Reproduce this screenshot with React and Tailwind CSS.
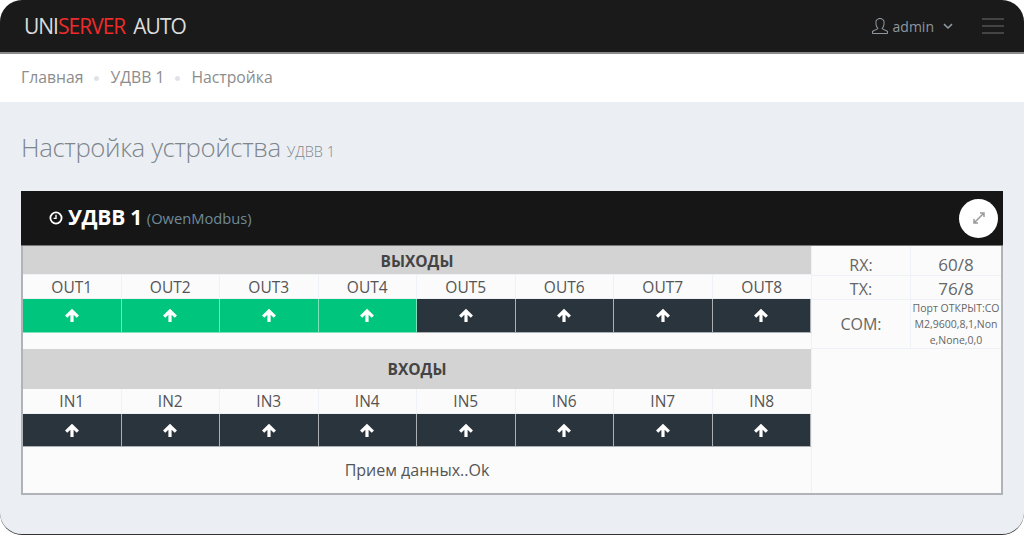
import React from "react";
import { SlUser } from "react-icons/sl";

const outs = ["OUT1","OUT2","OUT3","OUT4","OUT5","OUT6","OUT7","OUT8"];
const ins = ["IN1","IN2","IN3","IN4","IN5","IN6","IN7","IN8"];

function Labels({ items, h }) {
  return (
    <div className={`grid grid-cols-8 ${h} bg-[#fbfbfb] border-b border-[#eef1f5]`}>
      {items.map((t, i) => (
        <div key={t} className={`flex items-center justify-center pt-[1px] text-[15.5px] text-[#555] ${i < 7 ? "border-r border-[#eef1f5]" : ""}`}>{t}</div>
      ))}
    </div>
  );
}

function Arrow() {
  return (
    <svg className="w-[16px] h-[15px]" viewBox="0 0 15 14" fill="none" stroke="currentColor" strokeWidth="3">
      <path d="M7.5 13 V3.5 M2 8 L7.5 2.8 L13 8" />
    </svg>
  );
}

function Buttons({ green, h }) {
  return (
    <div className={`grid grid-cols-8 ${h}`}>
      {Array.from({ length: 8 }).map((_, i) => (
        <div key={i} className={`flex items-center justify-center text-white border-r border-b ${i < green ? "bg-[#00c57c] border-[#7fe0bc]" : "bg-[#2a343c] border-[#aab0b4]"}`}>
          <Arrow />
        </div>
      ))}
    </div>
  );
}

export default function App() {
  return (
    <div className="w-[1024px] h-[535px] bg-white overflow-hidden font-['Open_Sans',sans-serif]">
      <div className="h-[535px] rounded-[22px] overflow-hidden bg-[#ebeff4] border-b border-[#333] flex flex-col">
        <header className="h-[54px] shrink-0 bg-[#1a1a1a] border-b-2 border-[#8a8a8a] flex items-center pl-[24px] pr-[20px]">
          <div className="text-[21px] tracking-[-1px] text-[#dcdcdc] font-normal leading-none flex">
            <span>UNI</span><span className="text-[#ee2b2b]">SERVER</span><span className="ml-[8px]">AUTO</span>
          </div>
          <div className="ml-auto flex items-center text-[#8f979f] text-[14px]">
            <SlUser className="w-[16px] h-[16px] mr-[5px]" />
            <span>admin</span>
            <svg className="ml-[9px] w-[10px] h-[7px]" viewBox="0 0 10 7" fill="none" stroke="currentColor" strokeWidth="1.6"><path d="M1 1.2 L5 5 L9 1.2" /></svg>
            <div className="ml-[29px] w-[22px] flex flex-col gap-[5px]">
              <div className="h-[2px] bg-[#444]" />
              <div className="h-[2px] bg-[#444]" />
              <div className="h-[2px] bg-[#444]" />
            </div>
          </div>
        </header>

        <nav className="h-[48px] shrink-0 bg-white flex items-center pl-[21px] text-[15.75px] text-[#8c8c8c]">
          <span>Главная</span>
          <span className="w-[5px] h-[5px] rounded-full bg-[#dfe3e8] mx-[11px]" />
          <span>УДВВ 1</span>
          <span className="w-[5px] h-[5px] rounded-full bg-[#dfe3e8] mx-[11px]" />
          <span>Настройка</span>
        </nav>

        <main className="flex-1 px-[21px]">
          <h1 className="mt-[27px] h-[36px] flex items-baseline text-[#7f868c] font-light text-[25.8px] leading-[36px] tracking-[-0.4px]">
            Настройка устройства
            <small className="ml-[6px] text-[14.5px] font-light tracking-normal">УДВВ 1</small>
          </h1>

          <section className="mt-[26px] w-[982px] h-[304px] border-2 border-t-0 border-[#b0b4b8] bg-[#fbfbfb] flex flex-col">
            <div className="h-[55px] -mx-[2px] shrink-0 bg-[#161616] border-b border-[#777] flex items-center pl-[28px] pr-[5px]">
              <svg className="w-[14px] h-[14px] text-white mr-[5px]" viewBox="0 0 14 14" fill="none" stroke="currentColor" strokeWidth="1.8">
                <circle cx="7" cy="7" r="5.6" />
                <path d="M7 3.8 V7.4 H4.6" strokeWidth="1.4" />
              </svg>
              <span className="text-white font-bold text-[21px] tracking-[-0.3px]">УДВВ 1</span>
              <span className="ml-[5px] text-[14.7px] text-[#6f8a99]">(OwenModbus)</span>
              <button className="ml-auto w-[39px] h-[39px] rounded-full bg-white flex items-center justify-center">
                <svg className="w-[14px] h-[14px] text-[#9a9a9a]" viewBox="0 0 14 14" fill="none" stroke="currentColor" strokeWidth="1.5">
                  <path d="M2 12 L12 2 M8 2 H12 V6 M2 8 V12 H6" />
                </svg>
              </button>
            </div>

            <div className="flex flex-1">
              <div className="w-[789px] flex flex-col border-r border-[#eef1f5]">
                <div className="h-[29px] bg-[#d3d3d3] flex items-center justify-center pt-[3px] font-bold text-[15.5px] text-[#444] border-b border-[#eef1f5]">ВЫХОДЫ</div>
                <Labels items={outs} h="h-[24px]" />
                <Buttons green={4} h="h-[34px]" />
                <div className="h-[16px]" />
                <div className="h-[40px] bg-[#d3d3d3] flex items-center justify-center pt-[2px] font-bold text-[15.5px] text-[#444]">ВХОДЫ</div>
                <Labels items={ins} h="h-[25px]" />
                <Buttons green={0} h="h-[33px]" />
                <div className="flex-1 flex items-center justify-center text-[16px] text-[#555]">Прием данных..Ok</div>
              </div>
              <div className="flex-1 flex flex-col text-[#666]">
                <div className="grid grid-cols-[99px_1fr] h-[30px] border-b border-[#eef1f5] text-[16px]">
                  <div className="flex items-center justify-center border-r border-[#eef1f5] pt-[6px]">RX:</div>
                  <div className="flex items-center justify-center pt-[6px] text-[17px]">60/8</div>
                </div>
                <div className="grid grid-cols-[99px_1fr] h-[24px] border-b border-[#eef1f5] text-[16px]">
                  <div className="flex items-center justify-center border-r border-[#eef1f5]">TX:</div>
                  <div className="flex items-center justify-center text-[17px]">76/8</div>
                </div>
                <div className="grid grid-cols-[99px_1fr] h-[49px] border-b border-[#eef1f5]">
                  <div className="flex items-center justify-center border-r border-[#eef1f5] text-[16px]">COM:</div>
                  <div className="flex items-center justify-center text-center text-[10.5px] leading-[16px] break-all">Порт ОТКРЫТ:COM2,9600,8,1,None,None,0,0</div>
                </div>
              </div>
            </div>
          </section>
        </main>
      </div>
    </div>
  );
}
